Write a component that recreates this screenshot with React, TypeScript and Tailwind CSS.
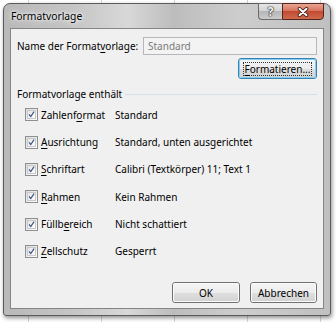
import React from "react";

function CheckBox() {
  return (
    <div className="w-[13px] h-[13px] border border-[#8e8f8f] bg-[linear-gradient(135deg,#dcdcdc,#fdfdfd)] p-[1px] shrink-0">
      <div className="w-full h-full border border-[#c9c9c9] bg-[linear-gradient(135deg,#e4e4e4,#ffffff)] flex items-center justify-center">
        <svg width="9" height="9" viewBox="0 0 9 9">
          <path d="M1.4 4.4 L3.5 7.3 L7.8 0.9" fill="none" stroke="#3e5786" strokeWidth="1.5" strokeLinejoin="round" />
        </svg>
      </div>
    </div>
  );
}

function Row({ pre, ul, post, value }: { pre: string; ul: string; post: string; value: string }) {
  return (
    <div className="h-[27.35px] flex items-center pl-[8px]">
      <CheckBox />
      <div className="w-[74px] ml-[3px] whitespace-nowrap">
        {pre}
        <span className="underline underline-offset-[2px]">{ul}</span>
        {post}
      </div>
      <div className="whitespace-nowrap">{value}</div>
    </div>
  );
}

function Btn({ children, focus }: { children: React.ReactNode; focus?: boolean }) {
  return (
    <div
      className={
        "h-[21px] rounded-[3px] border flex items-center justify-center " +
        (focus ? "border-[#3c7fb1]" : "border-[#707070]")
      }
    >
      <div
        className={
          "w-full h-full rounded-[2px] border flex items-center justify-center bg-[linear-gradient(180deg,#f4f4f4_0%,#ececec_50%,#dfdfdf_51%,#d3d3d3_100%)] " +
          (focus ? "border-[#7fcff3]" : "border-[#fbfbfb]")
        }
      >
        {children}
      </div>
    </div>
  );
}

export default function App() {
  return (
    <div className="relative w-[336px] h-[322px] overflow-hidden bg-white bg-[repeating-linear-gradient(90deg,#d4d4d4_0_1px,transparent_1px_73px)] bg-position-[28px_0] font-['Noto_Sans',sans-serif] text-[10px] leading-[14px] text-black">
      <div className="ml-[3px] mt-[3px] w-[328px] h-[313px] rounded-t-[7px] rounded-b-[3px] border border-[#5b5b5b] bg-[linear-gradient(90deg,#b9b9b9_0%,#c6c6c6_22%,#d8d8d8_38%,#bdbdbd_52%,#cdcdcd_72%,#c0c0c0_100%)] shadow-[1px_2px_4px_rgba(0,0,0,0.45)] flex flex-col px-[6px] pb-[6px]">
        <div className="h-[24px] flex justify-between items-start">
          <div className="mt-[5px] ml-[1px] text-[10.3px] leading-[14px] text-black [text-shadow:0_0_6px_#ffffff,0_0_3px_#ffffff]">
            Formatvorlage
          </div>
          <div className="flex -mt-[1px]">
            <div className="w-[24px] h-[17px] rounded-bl-[4px] border border-[#6a6a6a] border-r-0 bg-[linear-gradient(180deg,#e6e6e6_0%,#d4d4d4_45%,#b6b6b6_50%,#cbcbcb_100%)] flex items-center justify-center text-[12px] font-bold leading-none text-[#f4f4f4] [text-shadow:0_0_1px_#222,0_0_1px_#222,0_0_2px_#444]">
              ?
            </div>
            <div className="w-[42px] h-[17px] rounded-br-[4px] border border-[#55251d] bg-[linear-gradient(180deg,#e8a493_0%,#d7745f_45%,#c14a33_50%,#cf6a4e_100%)] flex items-center justify-center">
              <svg width="14" height="10" viewBox="0 0 14 10">
                <path d="M3.5 1.8 L10.5 8.2 M10.5 1.8 L3.5 8.2" stroke="#3b1a14" strokeWidth="3.6" strokeLinecap="round" />
                <path d="M3.5 1.8 L10.5 8.2 M10.5 1.8 L3.5 8.2" stroke="#ffffff" strokeWidth="2" strokeLinecap="round" />
              </svg>
            </div>
          </div>
        </div>
        <div className="flex-1 border border-[#858585] bg-[#f0f0f0] flex flex-col px-[6px] pt-[8px] pb-[5px]">
          <div className="flex justify-between items-center h-[18px]">
            <div className="whitespace-nowrap">
              Name der Format<span className="underline underline-offset-[2px]">v</span>orlage:
            </div>
            <div className="w-[174px] h-[18px] border border-[#b5b7bd] bg-[#f3f3f3] flex items-center pl-[4px] text-[#7a7a7a]">
              Standard
            </div>
          </div>
          <div className="self-end w-[79px] mt-[3px]">
            <Btn focus>
              <span className="border border-dotted border-[#333] px-[1px] leading-[12px] whitespace-nowrap">
                <span className="underline underline-offset-[2px]">F</span>ormatieren...
              </span>
            </Btn>
          </div>
          <div className="flex items-center mt-[8px] h-[14px]">
            <div className="whitespace-nowrap">Formatvorlage enthält</div>
            <div className="flex-1 ml-[3px] h-px bg-[#d5dfe5]" />
          </div>
          <div className="flex flex-col">
            <Row pre="Zahlenf" ul="o" post="rmat" value="Standard" />
            <Row pre="" ul="A" post="usrichtung" value="Standard, unten ausgerichtet" />
            <Row pre="" ul="S" post="chriftart" value="Calibri (Textkörper) 11; Text 1" />
            <Row pre="" ul="R" post="ahmen" value="Kein Rahmen" />
            <Row pre="Füllb" ul="e" post="reich" value="Nicht schattiert" />
            <Row pre="" ul="Z" post="ellschutz" value="Gesperrt" />
          </div>
          <div className="mt-auto flex justify-end gap-[10px]">
            <div className="w-[68px]">
              <Btn>OK</Btn>
            </div>
            <div className="w-[67px]">
              <Btn>Abbrechen</Btn>
            </div>
          </div>
        </div>
      </div>
    </div>
  );
}
